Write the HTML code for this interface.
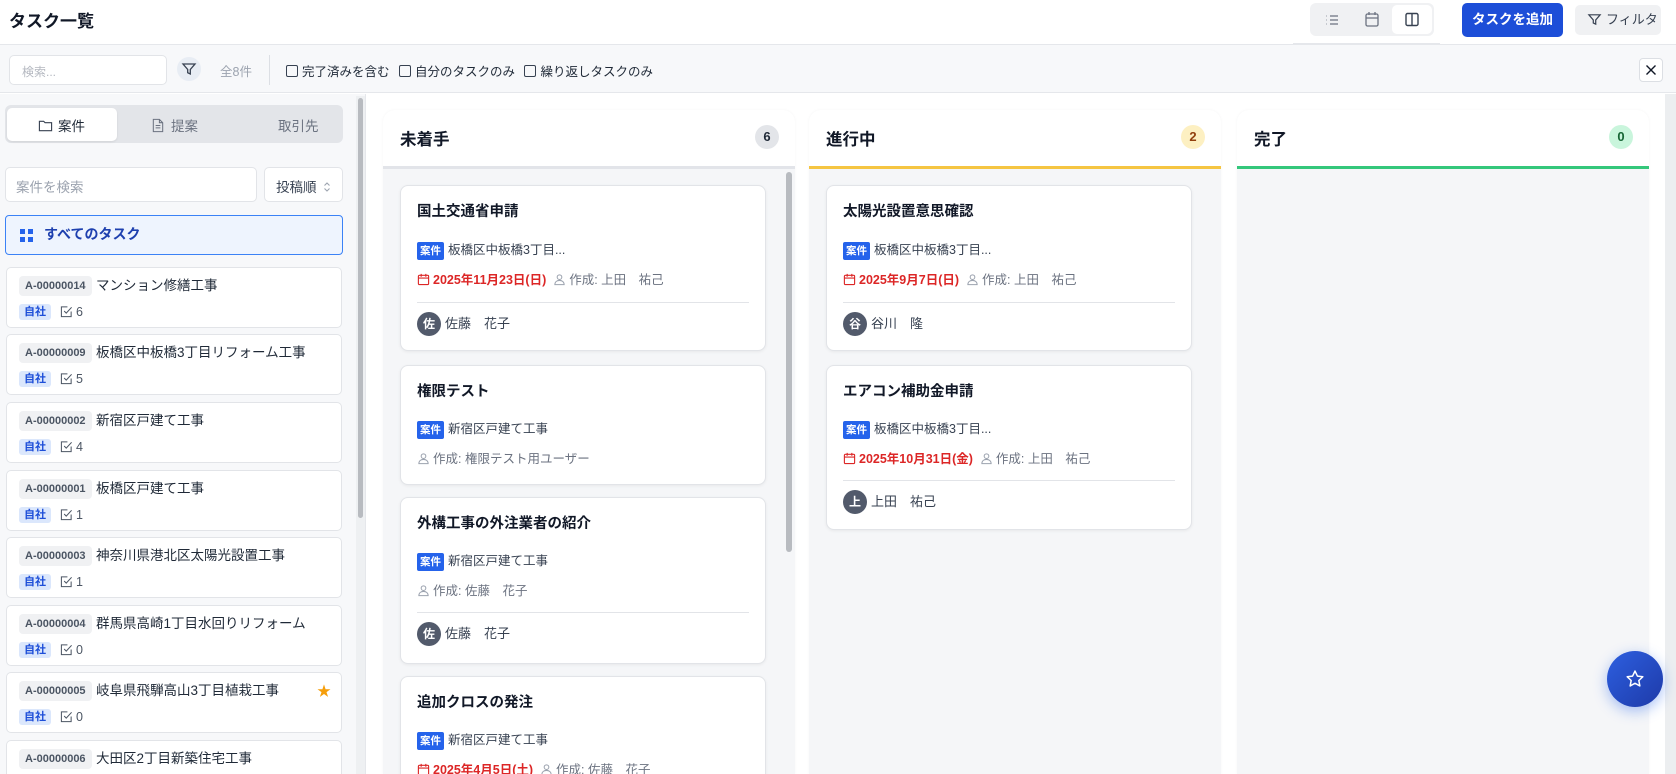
<!DOCTYPE html>
<html style="width:1676px;height:774px;overflow:hidden"><head><meta charset="utf-8"><style>
*{box-sizing:border-box;margin:0;padding:0}
body{width:1676px;height:774px;overflow:hidden;background:#fff;font-family:"Liberation Sans","Noto Sans CJK JP",sans-serif;color:#1f2937;position:relative}
.a{position:absolute}
.hdr{left:0;top:0;width:1676px;height:45px;background:#fff;border-bottom:1px solid #e5e7eb}
.tb{left:0;top:45px;width:1676px;height:48px;background:#f7f8fa;border-bottom:1px solid #e5e7eb}
.cb{display:inline-block;width:12px;height:12px;border:1.3px solid #374151;border-radius:2px;vertical-align:-1px;margin-right:4px}
.left{left:0;top:94px;width:366px;height:680px;background:#f7f8fa;border-right:1px solid #e5e7eb}
.item{position:absolute;left:6px;width:336px;height:61px;background:#fff;border:1px solid #e2e4e8;border-radius:5px}
.code{position:absolute;left:12px;top:8px;height:20px;padding:0 6px;background:#f0f1f3;border-radius:4px;font-size:11px;font-weight:bold;color:#4b5563;line-height:20px}
.nm{position:absolute;left:89px;top:8px;font-size:13.5px;line-height:20px;color:#1f2937}
.own{position:absolute;left:12px;top:36px;width:32px;height:16px;background:#dbe7fc;border-radius:3px;font-size:11px;font-weight:bold;color:#1d4ed8;text-align:center;line-height:16px}
.cnt{position:absolute;left:53px;top:35px;font-size:12.5px;color:#4b5563;line-height:18px;white-space:nowrap}
.col{position:absolute;top:110px;width:412px;height:664px;border-radius:12px 12px 0 0;background:#f5f6f8;overflow:hidden;box-shadow:0 0 3px rgba(0,0,0,.04)}
.ch{height:59px;background:#fff;position:relative;border-bottom:3px solid #e2e4e9}
.ch .t{position:absolute;left:17px;top:16px;font-size:16.5px;font-weight:bold;color:#111827}
.ch .n{position:absolute;right:16px;top:15px;width:24px;height:24px;border-radius:12px;font-size:13px;font-weight:bold;text-align:center;line-height:24px}
.card{position:absolute;left:17px;width:366px;background:#fff;border:1px solid #e2e4e8;border-radius:8px;box-shadow:0 1px 3px rgba(0,0,0,.06)}
.card .ti{position:absolute;left:16px;top:14px;font-size:14.5px;font-weight:bold;color:#111827}
.card .bd{position:absolute;left:16px;top:55px;font-size:12.5px;color:#374151;line-height:18px}
.bg{display:inline-block;background:#2563eb;color:#fff;font-size:10.5px;font-weight:bold;padding:0 3px;border-radius:2px;margin-right:4px;line-height:18px}
.card .dt{position:absolute;left:16px;font-size:12.5px;line-height:18px;color:#6b7280;white-space:nowrap}
.red{color:#dc2626;font-weight:bold}
.card .hr{position:absolute;left:16px;right:16px;height:1px;background:#e2e4e8}
.card .av{position:absolute;left:16px;font-size:13px;color:#374151;line-height:24px}
.av i{display:inline-block;width:24px;height:24px;border-radius:12px;background:#525a6b;color:#fff;font-style:normal;text-align:center;font-size:12px;font-weight:bold;margin-right:4px;vertical-align:top}
svg{vertical-align:middle}
.ic{vertical-align:-2px;margin-right:3px}
</style></head><body>
<svg width="0" height="0" style="position:absolute"><defs>
<symbol id="cal" viewBox="0 0 14 14"><g fill="none" stroke="#dc2626" stroke-width="1.2"><rect x="1.5" y="2.5" width="11" height="10" rx="1"/><path d="M1.5 5.5h11M4.5 1v3M9.5 1v3"/></g></symbol>
<symbol id="usr" viewBox="0 0 14 14"><g fill="none" stroke="#9ca3af" stroke-width="1.1"><circle cx="7" cy="4.5" r="2.5"/><path d="M2 12.5c0-3 2.2-4.5 5-4.5s5 1.5 5 4.5z"/></g></symbol>
<symbol id="chk" viewBox="0 0 14 14"><g fill="none" stroke="#4b5563" stroke-width="1.1"><path d="M12 7v5.5H1.5V2H8"/><path d="M4.5 6.5l2.2 2.2L12.5 2.5"/></g></symbol>
</defs></svg>
<div class="a hdr"></div>
<div class="a" style="left:9px;top:7px;font-size:17px;font-weight:bold;color:#111827">タスク一覧</div>
<div class="a" style="left:1310px;top:3px;width:124px;height:33px;background:#f0f1f3;border-radius:6px"></div>
<div class="a" style="left:1392px;top:5px;width:40px;height:29px;background:#fff;border-radius:5px"></div>
<div class="a" style="left:1293px;top:43px;width:147px;height:2px;background:#e5e7eb"></div>
<svg class="a" style="left:1324px;top:12px" width="16" height="16" viewBox="0 0 16 16" fill="none" stroke="#6b7280" stroke-width="1.3"><path d="M6 4h8M6 8h8M6 12h8M2.5 4h.5M2.5 8h.5M2.5 12h.5"/></svg>
<svg class="a" style="left:1364px;top:11px" width="16" height="17" viewBox="0 0 16 17" fill="none" stroke="#6b7280" stroke-width="1.3"><rect x="2" y="3" width="12" height="12" rx="1.5"/><path d="M2 7h12M5 1v3M11 1v3"/></svg>
<svg class="a" style="left:1404px;top:11px" width="16" height="17" viewBox="0 0 16 17" fill="none" stroke="#374151" stroke-width="1.4"><rect x="2" y="2.5" width="12" height="12" rx="1.5"/><path d="M8 2.5v12"/></svg>
<div class="a" style="left:1462px;top:3px;width:101px;height:34px;background:#1d4ed8;border-radius:5px;color:#fff;font-size:13.5px;font-weight:bold;text-align:center;line-height:34px">タスクを追加</div>
<div class="a" style="left:1575px;top:5px;width:86px;height:30px;background:#f0f1f3;border-radius:5px;color:#374151;font-size:13px;line-height:30px;padding-left:12px;white-space:nowrap"><svg width="15" height="15" viewBox="0 0 16 16" fill="none" stroke="#374151" stroke-width="1.3" style="vertical-align:-3px;margin-right:4px"><path d="M2 3h12l-4.7 5.5V13l-2.6-1.3V8.5z"/></svg>フィルタ</div>

<div class="a tb"></div>
<div class="a" style="left:9px;top:55px;width:158px;height:30px;background:#fff;border:1px solid #e2e4e8;border-radius:5px;font-size:12px;color:#b4b8c0;padding:7px 12px">検索...</div>
<div class="a" style="left:177px;top:57px;width:24px;height:24px;border-radius:12px;background:#e8edf4"></div>
<svg class="a" style="left:181px;top:61px" width="16" height="16" viewBox="0 0 16 16" fill="none" stroke="#374151" stroke-width="1.3"><path d="M2 3h12l-4.7 5.5V13l-2.6-1.3V8.5z"/></svg>
<div class="a" style="left:220px;top:61px;font-size:12.5px;color:#9ca3af">全8件</div>
<div class="a" style="left:269px;top:55px;width:1px;height:30px;background:#dcdfe4"></div>
<div class="a" style="left:286px;top:61px;font-size:12.5px;color:#1f2937;white-space:nowrap"><span class="cb"></span>完了済みを含む <span style="display:inline-block;width:6px"></span><span class="cb"></span>自分のタスクのみ <span style="display:inline-block;width:6px"></span><span class="cb"></span>繰り返しタスクのみ</div>
<div class="a" style="left:1639px;top:58px;width:24px;height:24px;background:#fff;border:1px solid #dcdfe4;border-radius:4px"></div>
<svg class="a" style="left:1645px;top:64px" width="12" height="12" viewBox="0 0 12 12" stroke="#111827" stroke-width="1.4"><path d="M1.5 1.5l9 9M10.5 1.5l-9 9"/></svg>

<div class="a left"></div>
<div class="a" style="left:5px;top:105px;width:338px;height:38px;background:#e3e5e9;border-radius:6px"></div>
<div class="a" style="left:7px;top:108px;width:110px;height:33px;background:#fff;border-radius:5px;box-shadow:0 1px 2px rgba(0,0,0,.08)"></div>
<div class="a" style="left:38px;top:115px;font-size:13.5px;color:#1f2937;white-space:nowrap"><svg width="15" height="15" viewBox="0 0 16 16" fill="none" stroke="#374151" stroke-width="1.2" style="vertical-align:-2px;margin-right:5px"><path d="M1.5 3.5h4.5l1.5 1.5h7v8.5h-13z"/></svg>案件</div>
<div class="a" style="left:151px;top:115px;font-size:13.5px;color:#6b7280;white-space:nowrap"><svg width="14" height="15" viewBox="0 0 14 16" fill="none" stroke="#6b7280" stroke-width="1.1" style="vertical-align:-2px;margin-right:6px"><path d="M2 1.5h6.5l3.5 3.5v9.5h-10z M8.5 1.5V5H12 M4.5 8h5M4.5 10.5h5"/></svg>提案</div>
<div class="a" style="left:278px;top:115px;font-size:13.5px;color:#6b7280">取引先</div>
<div class="a" style="left:5px;top:167px;width:252px;height:35px;background:#fff;border:1px solid #e2e4e8;border-radius:5px;font-size:13.5px;color:#9ca3af;padding:8px 10px">案件を検索</div>
<div class="a" style="left:264px;top:167px;width:79px;height:35px;background:#fff;border:1px solid #e2e4e8;border-radius:5px;font-size:13.5px;color:#374151;padding:8px 0 0 11px;white-space:nowrap">投稿順<svg width="8" height="12" viewBox="0 0 8 12" fill="none" stroke="#9ca3af" stroke-width="1.1" style="margin-left:6px;vertical-align:-1px"><path d="M1.5 4.5L4 2l2.5 2.5M1.5 7.5L4 10l2.5-2.5"/></svg></div>
<div class="a" style="left:5px;top:215px;width:338px;height:40px;background:#eef4fe;border:1px solid #3b82f6;border-radius:4px"></div>
<svg class="a" style="left:20px;top:229px" width="13" height="13" viewBox="0 0 13 13" fill="#2563eb"><rect x="0" y="0" width="5" height="5"/><rect x="8" y="0" width="5" height="5"/><rect x="0" y="8" width="5" height="5"/><rect x="8" y="8" width="5" height="5"/></svg>
<div class="a" style="left:44px;top:224px;font-size:14px;font-weight:bold;color:#1e40af">すべてのタスク</div>

<div class="item" style="top:267px"><span class="code">A-00000014</span><span class="nm">マンション修繕工事</span><span class="own">自社</span><span class="cnt"><svg class="ic" width="13" height="13"><use href="#chk"/></svg>6</span></div>
<div class="item" style="top:334px"><span class="code">A-00000009</span><span class="nm">板橋区中板橋3丁目リフォーム工事</span><span class="own">自社</span><span class="cnt"><svg class="ic" width="13" height="13"><use href="#chk"/></svg>5</span></div>
<div class="item" style="top:402px"><span class="code">A-00000002</span><span class="nm">新宿区戸建て工事</span><span class="own">自社</span><span class="cnt"><svg class="ic" width="13" height="13"><use href="#chk"/></svg>4</span></div>
<div class="item" style="top:470px"><span class="code">A-00000001</span><span class="nm">板橋区戸建て工事</span><span class="own">自社</span><span class="cnt"><svg class="ic" width="13" height="13"><use href="#chk"/></svg>1</span></div>
<div class="item" style="top:537px"><span class="code">A-00000003</span><span class="nm">神奈川県港北区太陽光設置工事</span><span class="own">自社</span><span class="cnt"><svg class="ic" width="13" height="13"><use href="#chk"/></svg>1</span></div>
<div class="item" style="top:605px"><span class="code">A-00000004</span><span class="nm">群馬県高崎1丁目水回りリフォーム</span><span class="own">自社</span><span class="cnt"><svg class="ic" width="13" height="13"><use href="#chk"/></svg>0</span></div>
<div class="item" style="top:672px"><span class="code">A-00000005</span><span class="nm">岐阜県飛騨高山3丁目植栽工事</span><span class="own">自社</span><span class="cnt"><svg class="ic" width="13" height="13"><use href="#chk"/></svg>0</span><span style="position:absolute;left:310px;top:8px;color:#f59e0b;font-size:14px">★</span></div>
<div class="item" style="top:740px;height:34px;border-bottom:none;border-radius:5px 5px 0 0"><span class="code">A-00000006</span><span class="nm">大田区2丁目新築住宅工事</span></div>
<div class="a" style="left:356px;top:96px;width:9px;height:678px;background:#eef0f2"></div>
<div class="a" style="left:358px;top:98px;width:5px;height:420px;background:#b8bbc0;border-radius:3px"></div>

<!-- column 1 -->
<div class="col" style="left:383px">
 <div class="ch"><span class="t">未着手</span><span class="n" style="background:#e3e5e9;color:#1f2937">6</span></div>
 <div class="a" style="left:403px;top:62px;width:6px;height:380px;background:#b8bbc0;border-radius:3px"></div>
 <div class="card" style="top:75px;height:166px"><div class="ti">国土交通省申請</div><div class="bd"><span class="bg">案件</span>板橋区中板橋3丁目...</div><div class="dt" style="top:85px"><span class="red"><svg class="ic" width="13" height="13"><use href="#cal"/></svg>2025年11月23日(日)</span>&nbsp; <svg class="ic" width="13" height="13"><use href="#usr"/></svg>作成: 上田　祐己</div><div class="hr" style="top:116px"></div><div class="av" style="top:126px"><i>佐</i>佐藤　花子</div></div>
 <div class="card" style="top:255px;height:120px"><div class="ti">権限テスト</div><div class="bd" style="top:54px"><span class="bg">案件</span>新宿区戸建て工事</div><div class="dt" style="top:84px"><svg class="ic" width="13" height="13"><use href="#usr"/></svg>作成: 権限テスト用ユーザー</div></div>
 <div class="card" style="top:387px;height:167px"><div class="ti">外構工事の外注業者の紹介</div><div class="bd" style="top:54px"><span class="bg">案件</span>新宿区戸建て工事</div><div class="dt" style="top:84px"><svg class="ic" width="13" height="13"><use href="#usr"/></svg>作成: 佐藤　花子</div><div class="hr" style="top:114px"></div><div class="av" style="top:124px"><i>佐</i>佐藤　花子</div></div>
 <div class="card" style="top:566px;height:140px"><div class="ti">追加クロスの発注</div><div class="bd" style="top:54px"><span class="bg">案件</span>新宿区戸建て工事</div><div class="dt" style="top:84px"><span class="red"><svg class="ic" width="13" height="13"><use href="#cal"/></svg>2025年4月5日(土)</span>&nbsp; <svg class="ic" width="13" height="13"><use href="#usr"/></svg>作成: 佐藤　花子</div></div>
</div>
<!-- column 2 -->
<div class="col" style="left:809px">
 <div class="ch" style="border-bottom-color:#f5c542"><span class="t">進行中</span><span class="n" style="background:#fdf0c2;color:#92400e">2</span></div>
 <div class="card" style="top:75px;height:166px"><div class="ti">太陽光設置意思確認</div><div class="bd"><span class="bg">案件</span>板橋区中板橋3丁目...</div><div class="dt" style="top:85px"><span class="red"><svg class="ic" width="13" height="13"><use href="#cal"/></svg>2025年9月7日(日)</span>&nbsp; <svg class="ic" width="13" height="13"><use href="#usr"/></svg>作成: 上田　祐己</div><div class="hr" style="top:116px"></div><div class="av" style="top:126px"><i>谷</i>谷川　隆</div></div>
 <div class="card" style="top:255px;height:165px"><div class="ti">エアコン補助金申請</div><div class="bd" style="top:54px"><span class="bg">案件</span>板橋区中板橋3丁目...</div><div class="dt" style="top:84px"><span class="red"><svg class="ic" width="13" height="13"><use href="#cal"/></svg>2025年10月31日(金)</span>&nbsp; <svg class="ic" width="13" height="13"><use href="#usr"/></svg>作成: 上田　祐己</div><div class="hr" style="top:114px"></div><div class="av" style="top:124px"><i>上</i>上田　祐己</div></div>
</div>
<!-- column 3 -->
<div class="col" style="left:1237px">
 <div class="ch" style="border-bottom-color:#34c77b"><span class="t">完了</span><span class="n" style="background:#c9f5dc;color:#166534">0</span></div>
</div>
<div class="a" style="left:1665px;top:94px;width:11px;height:680px;background:#eceef0"></div>
<div class="a" style="left:1607px;top:651px;width:56px;height:56px;border-radius:28px;background:linear-gradient(135deg,#2d5fe0,#1e3aa8);box-shadow:0 4px 14px rgba(37,99,235,.4)"></div>
<svg class="a" style="left:1625px;top:669px" width="20" height="20" viewBox="0 0 24 24" fill="none" stroke="#fff" stroke-width="1.8" stroke-linejoin="round"><path d="M12 2.5l2.9 6 6.5.8-4.8 4.5 1.2 6.5L12 17.1l-5.8 3.2 1.2-6.5-4.8-4.5 6.5-.8z"/></svg>
</body></html>
